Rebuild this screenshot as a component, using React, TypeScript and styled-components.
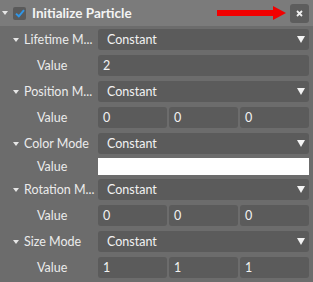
import React from 'react';
import styled, { createGlobalStyle } from 'styled-components';

const GlobalStyle = createGlobalStyle`
  html, body {
    margin: 0;
    padding: 0;
    background: #6c6c6c;
  }
  * {
    box-sizing: border-box;
  }
`;

const Panel = styled.div`
  width: 313px;
  height: 282px;
  background: #6c6c6c;
  font-family: Lato, 'Noto Sans', sans-serif;
  color: #ececec;
  overflow: hidden;
`;

const Header = styled.div`
  height: 26px;
  background: #7b7b7b;
  display: flex;
  align-items: center;
  padding: 0 4px 0 2px;
`;

const Caret = styled.span`
  width: 0;
  height: 0;
  border-left: 3px solid transparent;
  border-right: 3px solid transparent;
  border-top: 4px solid #e6e6e6;
  flex-shrink: 0;
`;

const CheckBox = styled.span`
  width: 13px;
  height: 13px;
  margin-left: 5px;
  border-radius: 2px;
  background: #5a5a5a;
  display: flex;
  align-items: center;
  justify-content: center;
  flex-shrink: 0;
`;

const Title = styled.span`
  margin-left: 6px;
  font-size: 13.5px;
  font-weight: 700;
  color: #f4f4f4;
  white-space: nowrap;
`;

const Spacer = styled.div`
  flex: 1;
`;

const Arrow = styled.svg`
  display: block;
  margin-right: 4px;
`;

const CloseButton = styled.div`
  width: 19px;
  height: 19px;
  border-radius: 3px;
  background: #5d5d5d;
  display: flex;
  align-items: center;
  justify-content: center;
`;

const Body = styled.div`
  display: flex;
  flex-direction: column;
  gap: 5px;
  padding: 3px 4px 0 0;
`;

const Row = styled.div<{ h?: number }>`
  display: grid;
  grid-template-columns: 98px 1fr;
  align-items: center;
  height: ${({ h = 21 }) => h}px;
`;

const SwatchRow = styled(Row)`
  margin: -1px 0;
`;

const Label = styled.div<{ indent: number }>`
  display: flex;
  align-items: center;
  padding-left: ${({ indent }) => indent}px;
  font-size: 12.5px;
  white-space: nowrap;
  color: #ebebeb;
`;

const LabelText = styled.span`
  margin-left: 5px;
`;

const Select = styled.div`
  height: 21px;
  border-radius: 3px;
  background: #5b5b5b;
  display: flex;
  align-items: center;
  justify-content: space-between;
  padding: 0 4px 0 9px;
  font-size: 12.5px;
  color: #f2f2f2;
`;

const SelectArrow = styled.span`
  width: 0;
  height: 0;
  border-left: 4px solid transparent;
  border-right: 4px solid transparent;
  border-top: 7px solid #f4f4f4;
`;

const Inputs = styled.div<{ count: number }>`
  display: grid;
  grid-template-columns: repeat(${({ count }) => count}, 1fr);
  gap: 2px;
`;

const Input = styled.div`
  height: 21px;
  border-radius: 3px;
  background: #5b5b5b;
  display: flex;
  align-items: center;
  padding-left: 5px;
  font-size: 12.5px;
  color: #f2f2f2;
`;

const ColorSwatch = styled.div`
  height: 17px;
  background: #ffffff;
`;

type Prop = { name: string; values?: string[]; color?: boolean };

const props: Prop[] = [
  { name: 'Lifetime M...', values: ['2'] },
  { name: 'Position M...', values: ['0', '0', '0'] },
  { name: 'Color Mode', color: true },
  { name: 'Rotation M...', values: ['0', '0', '0'] },
  { name: 'Size Mode', values: ['1', '1', '1'] },
];

const Check = () => (
  <svg width="10" height="9" viewBox="0 0 10 9">
    <path d="M1 4.6 L3.8 7.3 L9 1.2" stroke="#2f95e6" strokeWidth="2" fill="none" />
  </svg>
);

const App = () => (
  <>
    <GlobalStyle />
    <Panel>
      <Header>
        <Caret />
        <CheckBox>
          <Check />
        </CheckBox>
        <Title>Initialize Particle</Title>
        <Spacer />
        <Arrow width="69" height="14" viewBox="0 0 69 14">
          <rect x="0" y="4" width="58" height="6" fill="#f20000" />
          <polygon points="56,0 69,7 56,14" fill="#f20000" />
        </Arrow>
        <CloseButton>
          <svg width="7" height="7" viewBox="0 0 7 7">
            <path d="M1 1 L6 6 M6 1 L1 6" stroke="#f0f0f0" strokeWidth="1.8" />
          </svg>
        </CloseButton>
      </Header>
      <Body>
        {props.map((p) => (
          <React.Fragment key={p.name}>
            <Row>
              <Label indent={13}>
                <Caret />
                <LabelText>{p.name}</LabelText>
              </Label>
              <Select>
                Constant
                <SelectArrow />
              </Select>
            </Row>
            {p.color ? (
              <SwatchRow h={17}>
                <Label indent={37}>Value</Label>
                <ColorSwatch />
              </SwatchRow>
            ) : (
              <Row>
                <Label indent={37}>Value</Label>
                <Inputs count={p.values!.length}>
                  {p.values!.map((v, i) => (
                    <Input key={i}>{v}</Input>
                  ))}
                </Inputs>
              </Row>
            )}
          </React.Fragment>
        ))}
      </Body>
    </Panel>
  </>
);

export default App;
